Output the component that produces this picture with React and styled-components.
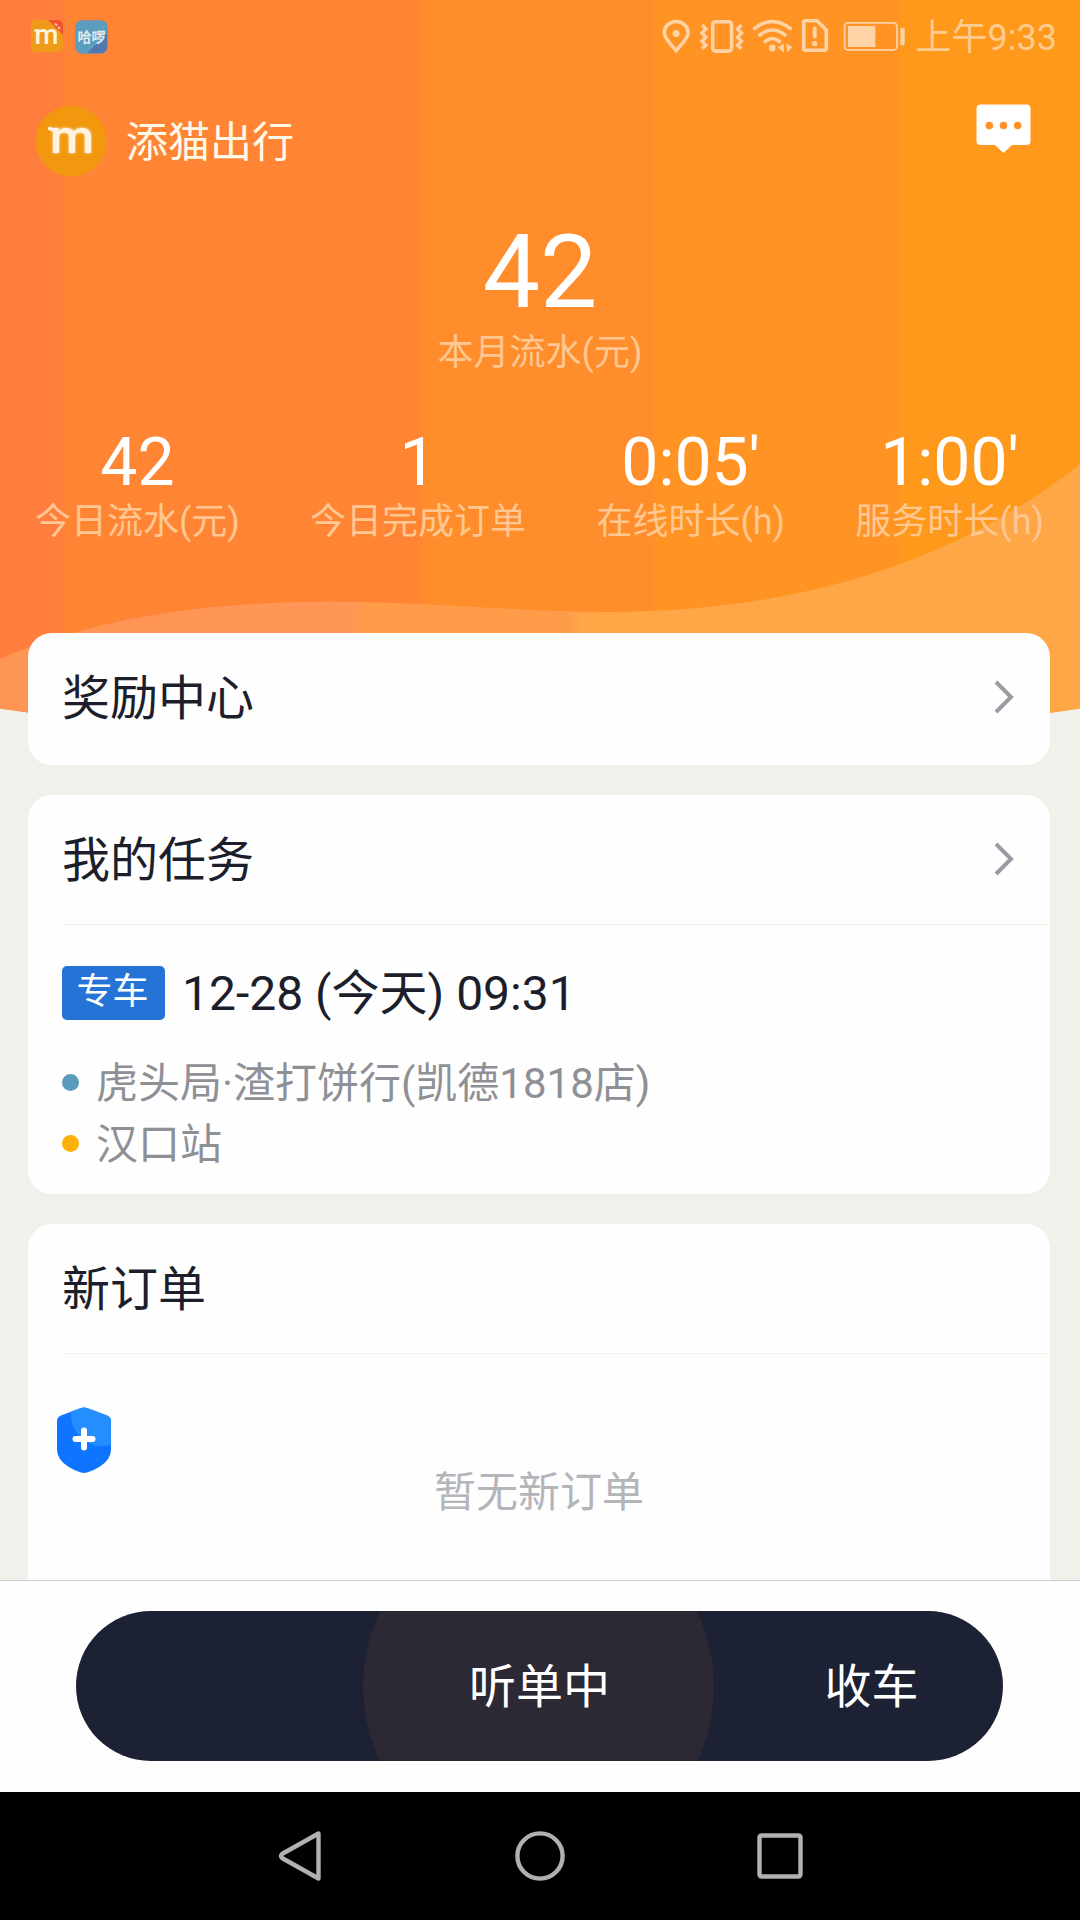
import React from 'react';
import styled, { createGlobalStyle } from 'styled-components';

const stats = [
  { value: "42", label: "今日流水(元)" },
  { value: "1", label: "今日完成订单" },
  { value: "0:05'", label: "在线时长(h)" },
  { value: "1:00'", label: "服务时长(h)" },
];

const task = {
  type: "专车",
  time: "12-28 (今天) 09:31",
  from: "虎头局·渣打饼行(凯德1818店)",
  to: "汉口站",
};

const StatusIcons = () => (
  <svg width="246" height="36" viewBox="661 18 246 36" fill="none" stroke="#ffd3a6" strokeWidth="3.6">
    {/* location */}
    <path d="M676.2 50.5C671 44.5 664.3 38.5 664.3 32.8a11.9 11.3 0 0 1 23.8 0C688.1 38.5 681.4 44.5 676.2 50.5Z" />
    <circle cx="676.1" cy="33.4" r="3.5" fill="#ffd3a6" stroke="none" />
    {/* vibrate */}
    <rect x="712.7" y="21.7" width="18.9" height="29.4" rx="3" />
    <path d="M702 25l4 4-4 4.200 4 4-4 4 4 4-4 3.600M741.500 25l-4 4 4 4.200-4 4 4 4-4 4 4 3.600" strokeWidth="3.4" />
    {/* wifi */}
    <path d="M754.500 28.500Q772.300 14.500 790.300 28.500M759.800 35Q772.300 25 785 35M765.200 41.500Q772.300 35.500 779.500 41.500" strokeLinecap="round" />
    <circle cx="772.3" cy="48" r="3.4" fill="#ffd3a6" stroke="none" />
    <path d="M783.800 43.500v9l-6-5ZM786.300 43.500l6 3.500-5 5.500Z" fill="#ffd3a6" stroke="none" />
    {/* sim */}
    <path d="M805.500 20.700H817L826.300 30V48.500a1.800 1.800 0 0 1-1.800 1.800H805.500a1.800 1.800 0 0 1-1.800-1.800V22.500a1.800 1.800 0 0 1 1.800-1.800Z" />
    <path d="M814.700 28.500v8" strokeWidth="4" strokeLinecap="round" />
    <circle cx="814.7" cy="43.500" r="2.600" fill="#ffd3a6" stroke="none" />
    {/* battery */}
    <rect x="844.600" y="22.900" width="52.400" height="27" rx="3.500" strokeWidth="1.800" />
    <rect x="848" y="26" width="27.300" height="21" fill="#ffd3a6" stroke="none" />
    <rect x="900.300" y="27.700" width="4.400" height="17.500" rx="1.500" fill="#ffd3a6" stroke="none" />
  </svg>
);

const MessageIcon = () => (
  <svg width="56" height="50" viewBox="0 0 56 50">
    <path d="M4.500 .5H50.500a4 4 0 0 1 4 4V37a4 4 0 0 1-4 4H36L27.500 49 19 41H4.500a4 4 0 0 1-4-4V4.500a4 4 0 0 1 4-4Z" fill="#fff" />
    <g fill="#ff9226">
      <circle cx="13.300" cy="21.500" r="3.800" />
      <circle cx="27.500" cy="21.500" r="3.800" />
      <circle cx="41.700" cy="21.500" r="3.800" />
    </g>
  </svg>
);

const Chevron = () => (
  <svg width="20" height="34" viewBox="0 0 20 34" fill="none" stroke="#9b9ca3" strokeWidth="4">
    <path d="M2 2L17 17 2 32" />
  </svg>
);

const ShieldIcon = () => (
  <svg width="54" height="67" viewBox="0 0 54 67">
    <defs>
      <clipPath id="shield">
        <path d="M24 1Q27 0 30 1L50 8.500Q54 10 54 14V43Q54 52 43 59.500 36 64 30 65.500 27 66.300 24 65.500 18 64 11 59.500 0 52 0 43V14Q0 10 4 8.500Z" />
      </clipPath>
    </defs>
    <g clipPath="url(#shield)">
      <rect width="54" height="67" fill="#0f74ff" />
      <circle cx="45" cy="8" r="31" fill="#258eff" />
    </g>
    <path d="M27 23.500v17M18.500 32h17" stroke="#fff" strokeWidth="6" strokeLinecap="round" />
  </svg>
);

const Backdrop = () => (
  <BackdropSvg width="1080" height="760" viewBox="0 0 1080 760">
    <defs>
      <linearGradient id="base" x1="0" x2="1080" y1="0" y2="0" gradientUnits="userSpaceOnUse">
        <stop offset="0.055" stopColor="#ff7d3d" />
        <stop offset="0.062" stopColor="#ff8535" />
        <stop offset="0.389" stopColor="#ff8535" />
        <stop offset="0.392" stopColor="#ff8d2b" />
        <stop offset="0.602" stopColor="#ff8d2b" />
        <stop offset="0.608" stopColor="#ff9424" />
        <stop offset="0.833" stopColor="#ff9424" />
        <stop offset="0.834" stopColor="#ff991b" />
      </linearGradient>
      <linearGradient id="wave" x1="0" x2="1080" y1="0" y2="0" gradientUnits="userSpaceOnUse">
        <stop offset="0.325" stopColor="#ff9655" />
        <stop offset="0.342" stopColor="#ff9c4a" />
        <stop offset="0.525" stopColor="#ff9c4a" />
        <stop offset="0.538" stopColor="#ffa646" />
      </linearGradient>
    </defs>
    <path d="M0 0H1080V708.500Q540 790 0 708.500Z" fill="url(#base)" />
    <path d="M0 659C90 620 200 601.700 330 601.700 430 601.700 520 612 609 612 800 612 960 560 1080 464V708.500Q540 790 0 708.500Z" fill="url(#wave)" />
  </BackdropSvg>
);

const App = () => {
  return (
    <Screen>
      <GlobalStyle />
      <Main>
        <Backdrop />
        <Content>
          <StatusBar>
            <AppBadges>
              <MaoBadge>
                <svg width="32" height="32" viewBox="0 0 32 32">
                  <path d="M17 0H27a5 5 0 0 1 5 5V15Z" fill="#f0532d" />
                  <path d="M24 3.500l2 2M27 7l2 2" stroke="#fbc9a8" strokeWidth="2" />
                  <path d="M3 10.500L7.500 11" stroke="#fbe6c8" strokeWidth="2.200" />
                  <MaoLetter x="3.5" y="24" $size={27} textLength="24" lengthAdjust="spacingAndGlyphs">m</MaoLetter>
                </svg>
              </MaoBadge>
              <HaloBadge>哈啰</HaloBadge>
            </AppBadges>
            <StatusRight>
              <StatusIcons />
              <Clock>上午9:33</Clock>
            </StatusRight>
          </StatusBar>

          <Header>
            <Avatar>
              <svg width="70" height="70" viewBox="0 0 70 70">
                <path d="M13.500 22.500L20 25" stroke="#fff3df" strokeWidth="3.5" fill="none" strokeLinecap="round" />
                <MaoLetter x="14" y="47" $size={47} $glow textLength="44" lengthAdjust="spacingAndGlyphs">m</MaoLetter>
              </svg>
            </Avatar>
            <Name>添猫出行</Name>
            <MessageButton><MessageIcon /></MessageButton>
          </Header>

          <Month>
            <MonthValue>42</MonthValue>
            <StatLabel>本月流水(元)</StatLabel>
          </Month>

          <Stats>
            {stats.map((stat, index) => (
              <Stat key={index}>
                <StatValue>{stat.value}</StatValue>
                <StatLabel>{stat.label}</StatLabel>
              </Stat>
            ))}
          </Stats>

          <Cards>
            <Card $height={132}>
              <CardHead>
                <CardTitle>奖励中心</CardTitle>
                <Chevron />
              </CardHead>
            </Card>

            <Card $height={399}>
              <CardHead>
                <CardTitle>我的任务</CardTitle>
                <Chevron />
              </CardHead>
              <Divider />
              <TaskTop>
                <Tag>{task.type}</Tag>
                <TaskTime>{task.time}</TaskTime>
              </TaskTop>
              <Route>
                <Stop><Dot $color="#5b9cbd" /><span>{task.from}</span></Stop>
                <Stop><Dot $color="#fdb007" /><span>{task.to}</span></Stop>
              </Route>
            </Card>

            <Card $height={380}>
              <CardHead>
                <CardTitle>新订单</CardTitle>
              </CardHead>
              <Divider />
              <Empty>暂无新订单</Empty>
            </Card>
          </Cards>
        </Content>
        <SafetyButton><ShieldIcon /></SafetyButton>
      </Main>

      <BottomBar>
        <Pill>
          <Listening>听单中</Listening>
          <StopWork>收车</StopWork>
        </Pill>
      </BottomBar>

      <NavBar>
        <svg width="44" height="52" viewBox="0 0 44 52" fill="none" stroke="#b1b1b5" strokeWidth="4.4" strokeLinejoin="round">
          <path d="M40.500 3.500V48.500L4 28Q2 26 4 24Z" />
        </svg>
        <svg width="50" height="50" viewBox="0 0 50 50" fill="none" stroke="#b1b1b5" strokeWidth="4.4">
          <circle cx="25" cy="25" r="22.6" />
        </svg>
        <svg width="46" height="46" viewBox="0 0 46 46" fill="none" stroke="#b1b1b5" strokeWidth="4.4">
          <rect x="2.500" y="2.500" width="41" height="41" rx="2" />
        </svg>
      </NavBar>
    </Screen>
  );
};

const GlobalStyle = createGlobalStyle`
  body {
    margin: 0;
    background: #000;
    font-family: Roboto, "Noto Sans CJK SC", sans-serif;
  }
  * {
    box-sizing: border-box;
  }
  svg {
    display: block;
    flex-shrink: 0;
  }
`;

const Screen = styled.div`
  width: 1080px;
  height: 1920px;
  display: flex;
  flex-direction: column;
  overflow: hidden;
`;

const Main = styled.main`
  position: relative;
  height: 1580px;
  display: grid;
  grid-template-columns: 1080px;
  overflow: hidden;
  background: #f0f1eb;
`;

const BackdropSvg = styled.svg`
  grid-area: 1 / 1;
`;

const Content = styled.div`
  grid-area: 1 / 1;
  position: relative;
  display: flex;
  flex-direction: column;
`;

const StatusBar = styled.div`
  height: 72px;
  padding: 18px 23px 0 31px;
  display: flex;
  justify-content: space-between;
  align-items: flex-start;
`;

const AppBadges = styled.div`
  display: flex;
  gap: 12px;
  padding-top: 2px;
`;

const MaoBadge = styled.div`
  width: 32px;
  height: 32px;
  border-radius: 5px;
  background: #f09a1a;
`;

const MaoLetter = styled.text`
  font-family: Roboto, sans-serif;
  font-weight: 500;
  font-size: ${props => props.$size}px;
  fill: #fff3df;
  ${props => props.$glow && "filter: drop-shadow(0 0 1.5px #fff3df);"}
`;

const HaloBadge = styled.div`
  width: 33px;
  height: 34px;
  border-radius: 7px;
  border: 1px solid #8f8b9a;
  background: linear-gradient(135deg, #5b9dbe 68%, #5179ad 70%);
  color: #dfeaf0;
  font-size: 14px;
  font-weight: bold;
  line-height: 32px;
  display: flex;
  justify-content: center;
  white-space: nowrap;
`;

const StatusRight = styled.div`
  display: flex;
  gap: 9px;
`;

const Clock = styled.span`
  padding-top: 1px;
  color: #ffcb90;
  font-size: 36px;
  line-height: 39px;
`;

const Header = styled.header`
  height: 138px;
  padding: 0 48px 0 36px;
  display: flex;
  align-items: center;
`;

const Avatar = styled.div`
  width: 70px;
  height: 70px;
  border-radius: 50%;
  background: #f2980f;
  box-shadow: 0 0 2px #f2980f;
`;

const Name = styled.span`
  margin-left: 20px;
  padding-top: 4px;
  color: #fff9ea;
  font-size: 42px;
  line-height: 50px;
`;

const MessageButton = styled.div`
  margin-left: auto;
  padding-bottom: 24px;
`;

const Month = styled.div`
  padding-top: 11px;
  display: flex;
  flex-direction: column;
  align-items: center;
  gap: 10px;
`;

const MonthValue = styled.div`
  color: #fff;
  font-size: 102px;
  line-height: 102px;
`;

const StatLabel = styled.div`
  color: #ffc792;
  font-size: 36px;
  line-height: 40px;
`;

const Stats = styled.div`
  height: 260px;
  padding: 55px 36px 0 35px;
  display: flex;
  justify-content: space-between;
`;

const Stat = styled.div`
  display: flex;
  flex-direction: column;
  align-items: center;
  gap: 4px;
`;

const StatValue = styled.div`
  color: #fff;
  font-size: 66px;
  line-height: 70px;
`;

const Cards = styled.div`
  padding: 0 30px 0 28px;
  display: flex;
  flex-direction: column;
  gap: 30px;
`;

const Card = styled.section`
  height: ${props => props.$height}px;
  padding-left: 34px;
  border-radius: 24px;
  background: #fefefe;
  overflow: hidden;
`;

const CardHead = styled.div`
  height: 129px;
  padding-right: 36px;
  padding-bottom: 1px;
  display: flex;
  justify-content: space-between;
  align-items: center;
`;

const CardTitle = styled.h2`
  margin: 0;
  padding-top: 3px;
  color: #1d1e2c;
  font-size: 48px;
  font-weight: 400;
  line-height: 56px;
`;

const Divider = styled.div`
  height: 1px;
  margin-right: 1px;
  background: #f0f0ec;
`;

const TaskTop = styled.div`
  padding-top: 40px;
  display: flex;
  align-items: center;
  gap: 17px;
`;

const Tag = styled.span`
  width: 103px;
  height: 54px;
  padding-right: 2px;
  border-radius: 5px;
  background: #2573d6;
  color: #fff;
  font-size: 36px;
  line-height: 53px;
  text-align: center;
`;

const TaskTime = styled.span`
  padding-top: 2px;
  color: #1d1e2c;
  font-size: 48px;
  line-height: 54px;
`;

const Route = styled.div`
  margin-top: 31px;
`;

const Stop = styled.div`
  height: 61px;
  display: flex;
  align-items: center;
  gap: 17px;
  color: #8f9096;
  font-size: 42px;
  line-height: 60px;

  span {
    padding-top: 2px;
  }
`;

const Dot = styled.i`
  width: 17px;
  height: 17px;
  border-radius: 50%;
  background: ${props => props.$color};
`;

const Empty = styled.div`
  padding: 114px 34px 0 0;
  color: #b4b5ba;
  font-size: 42px;
  line-height: 50px;
  text-align: center;
`;

const SafetyButton = styled.div`
  position: absolute;
  left: 57px;
  top: 1407px;
`;

const BottomBar = styled.div`
  height: 212px;
  padding: 30px 77px 0 76px;
  border-top: 1px solid #cccdd0;
  background: #fefefe;
`;

const Pill = styled.div`
  height: 150px;
  border-radius: 75px;
  display: grid;
  grid-template-columns: 351px 1fr;
  align-items: center;
  align-content: center;
  padding-left: 287px;
  overflow: hidden;
  background: #1d2134;
  color: #fff;
  font-size: 47px;
  line-height: 56px;
`;

const Listening = styled.div`
  height: 351px;
  padding-left: 2px;
  border-radius: 50%;
  background: #2c2834;
  line-height: 351px;
  text-align: center;
`;

const StopWork = styled.div`
  padding: 2px 0 0 26px;
  text-align: center;
`;

const NavBar = styled.nav`
  height: 128px;
  padding: 0 277px 0 278px;
  display: flex;
  justify-content: space-between;
  align-items: center;
  background: #000;
`;

export default App;
